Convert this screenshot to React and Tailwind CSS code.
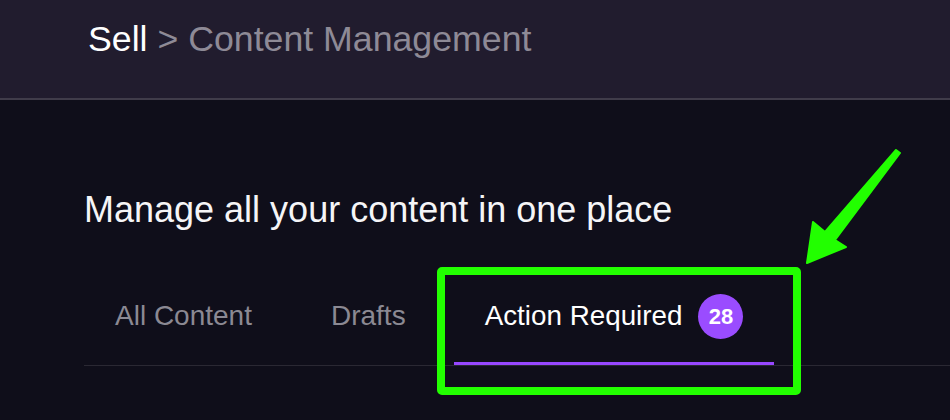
import React from "react";

const tabs = [
  { label: "All Content", active: false },
  { label: "Drafts", active: false },
  { label: "Action Required", active: true, count: 28 },
];

const Tab = ({ label, active, count }) => {
  if (active) {
    return (
      <button className="flex items-center gap-[16px] px-[31px] pb-[30px] border-b-[3px] border-[#9747ff]">
        <span className="text-[27.8px] leading-[32px] text-white">{label}</span>
        <span className="w-[45px] h-[45px] -my-[7px] rounded-full bg-[#9a4cff] flex items-center justify-center text-[22px] font-bold text-white">
          {count}
        </span>
      </button>
    );
  }
  return (
    <button className="px-[31px] pb-[30px] border-b-[3px] border-transparent">
      <span className="text-[28px] leading-[32px] text-[#8b8993]">{label}</span>
    </button>
  );
};

const App = () => {
  return (
    <div
      className="relative w-full h-[420px] overflow-hidden bg-[#0f0e1a]"
      style={{ fontFamily: '"Liberation Sans", Arial, sans-serif' }}
    >
      <header className="h-[100px] bg-[#211c2e] border-b-2 border-[#403c4a] pl-[88px] pt-[19px]">
        <p className="text-[35.7px] leading-[40px]">
          <span className="text-white">Sell</span>
          <span className="text-[#8e8a96]"> &gt; Content Management</span>
        </p>
      </header>

      <main className="pl-[84px]">
        <h1 className="mt-[90px] text-[36px] leading-[40px] text-[#f5f5f7]">
          Manage all your content in one place
        </h1>

        <nav className="mt-[70px] flex gap-[17px] border-b border-[#2a2833]">
          {tabs.map((t) => (
            <Tab key={t.label} {...t} />
          ))}
        </nav>
      </main>

      {/* annotation */}
      <div className="absolute left-[437px] top-[267px] w-[364px] h-[128px] border-[8px] border-[#22ff00] rounded-[5px] pointer-events-none" />
      <svg
        className="absolute left-0 top-0 pointer-events-none"
        width="950"
        height="420"
        viewBox="0 0 950 420"
      >
        <polygon
          points="896,150 900,153 835,240 846,247 807,263 813,222 825,232"
          fill="#22ff00"
          stroke="#22ff00"
          strokeWidth="2"
          strokeLinejoin="round"
        />
      </svg>
    </div>
  );
};

export default App;
